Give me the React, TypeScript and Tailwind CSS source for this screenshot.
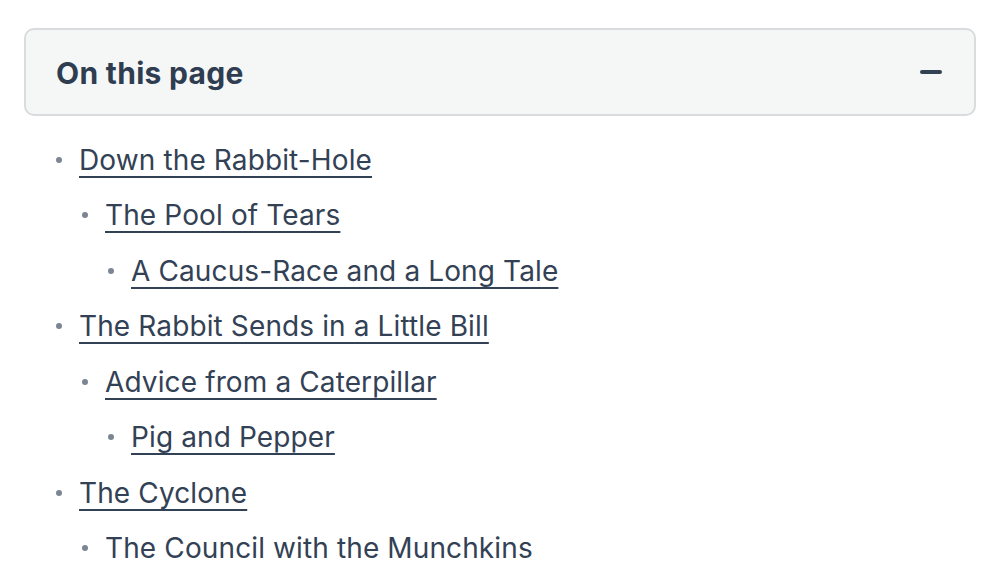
import React from "react";

type Item = { title: string; level: number; link: boolean };

const items: Item[] = [
  { title: "Down the Rabbit-Hole", level: 0, link: true },
  { title: "The Pool of Tears", level: 1, link: true },
  { title: "A Caucus-Race and a Long Tale", level: 2, link: true },
  { title: "The Rabbit Sends in a Little Bill", level: 0, link: true },
  { title: "Advice from a Caterpillar", level: 1, link: true },
  { title: "Pig and Pepper", level: 2, link: true },
  { title: "The Cyclone", level: 0, link: true },
  { title: "The Council with the Munchkins", level: 1, link: false },
];

const indent = ["pl-0", "pl-[26px]", "pl-[52px]"];

export default function App() {
  return (
    <div
      className="w-[1000px] h-[562px] overflow-hidden bg-white px-6 pt-7 text-[#334155]"
      style={{ fontFamily: "Inter, 'Noto Sans', sans-serif" }}
    >
      <div className="flex h-[88px] items-center justify-between rounded-[10px] border-2 border-[#d9dcdf] bg-[#f5f7f7] pl-[30px] pr-[32px]">
        <span className="text-[30px] font-bold text-[#2f3d51] tracking-[0.3px] leading-[40px] pt-[2px]">On this page</span>
        <span className="block h-[4px] w-[22px] rounded-full bg-[#334155]" />
      </div>
      <ul className="mt-[16px] flex flex-col pl-[32px]">
        {items.map((it, i) => (
          <li key={i} className={`flex h-[55.5px] items-center ${indent[it.level]}`}>
            <span className="mr-[17px] block h-[6px] w-[6px] shrink-0 rounded-full bg-[#7b8594]" />
            <span
              className={`whitespace-nowrap text-[28px] tracking-[0.12px] leading-[38px] text-[#334155] ${
                it.link ? "underline decoration-2 underline-offset-[6px] decoration-[#334155]" : ""
              }`}
            >
              {it.title}
            </span>
          </li>
        ))}
      </ul>
    </div>
  );
}
